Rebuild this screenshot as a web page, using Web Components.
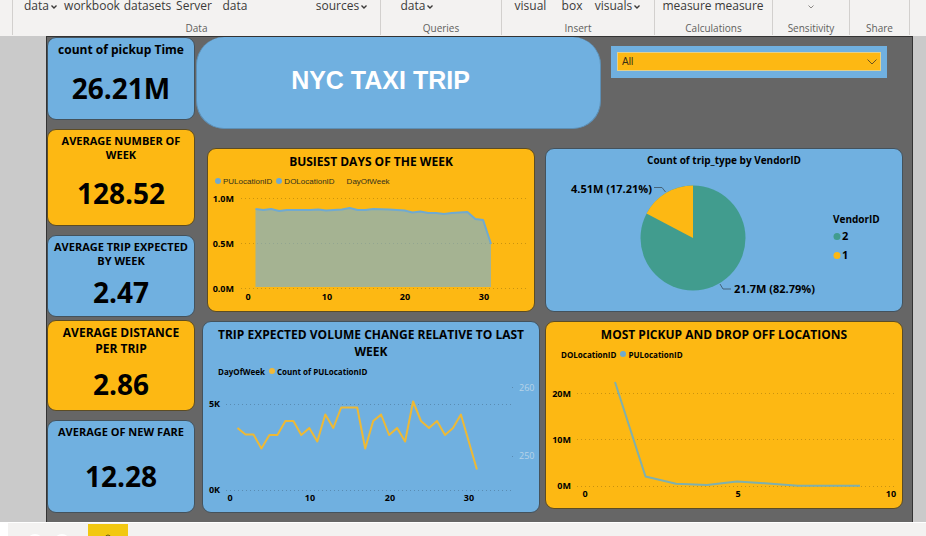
<!DOCTYPE html>
<html lang="en">
<head>
<meta charset="utf-8">
<title>NYC Taxi Trip</title>
<style>
  html, body { margin: 0; }
  body { font-family: "Open Sans", "Noto Sans", sans-serif; color: #000; background: #f3f2f1; overflow: hidden; }
</style>
</head>
<body>
<report-app></report-app>

<template id="ribbon-button-tpl">
  <style>
    :host { display: block; text-align: center; font-size: 12px; line-height: 12px; }
    button { font: inherit; color: #3b3a39; background: none; border: 0; padding: 0; margin: 0 -8px; white-space: nowrap; }
    svg { display: none; width: 6px; height: 4px; margin-left: 2px; vertical-align: 1px; fill: none; stroke: #3b3a39; stroke-width: 1.4; }
    :host([menu]) svg { display: inline-block; }
    :host([menu="only"]) svg { stroke: #8a8886; stroke-width: 1; margin: 0; }
  </style>
  <button type="button"><slot></slot><svg viewBox="0 0 6 4" aria-hidden="true"><path d="M.5 .5 3 3 5.5 .5"/></svg></button>
</template>

<template id="ribbon-group-tpl">
  <style>
    :host { display: flex; flex-direction: column; justify-content: space-between; border-right: 1px solid #d2d0ce; min-width: 0; }
    .row { display: grid; grid-template-columns: var(--cols, 1fr); height: 12px; }
    .label { font-size: 10px; line-height: 14px; color: #605e5c; text-align: center; }
  </style>
  <div class="row"><slot></slot></div>
  <div class="label"></div>
</template>

<template id="app-ribbon-tpl">
  <style>
    :host { display: grid; grid-template-columns: 13fr 368fr 121fr 153fr 118fr 77fr 60fr 16fr; height: 36px; padding-bottom: 1px; box-sizing: border-box; background: #f3f2f1; }
    .data { --cols: 7fr 41fr 62fr 49fr 44fr 38fr 61fr 53fr 12fr; }
    .queries { --cols: 16fr 40fr 64fr; }
    .insert { --cols: 9fr 39fr 8fr 28fr 8fr 47fr 13fr; }
    .calc { --cols: 6fr 52fr 52fr 7fr; }
  </style>
  <ribbon-group></ribbon-group>
  <ribbon-group class="data" label="Data">
    <span></span><ribbon-button menu>data</ribbon-button><ribbon-button>workbook</ribbon-button><ribbon-button>datasets</ribbon-button><ribbon-button>Server</ribbon-button><ribbon-button>data</ribbon-button><span></span><ribbon-button menu>sources</ribbon-button>
  </ribbon-group>
  <ribbon-group class="queries" label="Queries"><span></span><ribbon-button menu>data</ribbon-button></ribbon-group>
  <ribbon-group class="insert" label="Insert"><span></span><ribbon-button>visual</ribbon-button><span></span><ribbon-button>box</ribbon-button><span></span><ribbon-button menu>visuals</ribbon-button></ribbon-group>
  <ribbon-group class="calc" label="Calculations"><span></span><ribbon-button>measure</ribbon-button><ribbon-button>measure</ribbon-button></ribbon-group>
  <ribbon-group label="Sensitivity"><ribbon-button menu="only"></ribbon-button></ribbon-group>
  <ribbon-group label="Share"></ribbon-group>
</template>

<template id="kpi-card-tpl">
  <style>
    :host { display: flex; flex-direction: column; box-sizing: border-box; border: 1px solid #44525c; border-radius: 9px; background: #70b0e0; padding: 4px 4px 0; text-align: center; min-height: 0; }
    :host([tone="amber"]) { background: #fdb813; border-color: #5c4c24; }
    h2 { margin: 0; font-size: 11px; line-height: 14px; font-weight: 700; }
    :host([size="large"]) h2 { font-size: 12px; line-height: 16px; }
    .value { flex: 1; display: flex; align-items: center; justify-content: center; font-size: 28px; line-height: 32px; font-weight: 700; }
  </style>
  <h2></h2><div class="value"><slot></slot></div>
</template>

<template id="slicer-box-tpl">
  <style>
    :host { display: block; background: #70b0e0; padding: 6px 6px 7px; }
    label { display: grid; align-items: center; }
    select { grid-area: 1 / 1; appearance: none; width: 100%; height: 19px; margin: 0; padding: 0 4px; border: 1px solid #e3d08c; border-radius: 0; background: #fdb813; color: #3b3014; font: 10px/16px "Liberation Sans", sans-serif; }
    svg { grid-area: 1 / 1; justify-self: end; margin-right: 4px; width: 10px; height: 6px; fill: none; stroke: #6b5320; pointer-events: none; }
  </style>
  <label><select aria-label="Filter"><option>All</option></select><svg viewBox="0 0 10 6" aria-hidden="true"><path d="M.5 .5 5 5 9.5 .5"/></svg></label>
</template>

<template id="legend-item-tpl">
  <style>
    :host { display: flex; align-items: center; }
    i { width: 6px; height: 6px; border-radius: 50%; background: var(--dot, transparent); margin-right: 2px; }
  </style>
  <i></i><slot></slot>
</template>

<template id="chart-card-tpl">
  <style>
    :host { display: block; box-sizing: border-box; border: 1px solid #44525c; border-radius: 9px; background: #70b0e0; padding: 4px 0; }
    :host([tone="amber"]) { background: #fdb813; border-color: #5c4c24; }
    h2 { margin: 0; padding: 0 8px; font-size: 12px; line-height: 17px; font-weight: 700; text-align: center; }
    :host([small]) h2 { font-size: 10px; line-height: 15px; padding-bottom: 2px; }
    .legend { display: flex; gap: 4px; margin: 4px 0 1px 7px; height: 14px; font-size: 8px; font-weight: 700; }
    .legend ::slotted(legend-item) { flex: none; }
    :host([small]) .legend { display: none; }
    :host([plain]) .legend { font-family: "Liberation Sans", sans-serif; font-weight: 400; color: #33301c; }
    svg { display: block; width: 100%; height: auto; font-size: 9px; font-weight: 700; }
    .grid { fill: none; stroke: #000; stroke-opacity: .2; stroke-dasharray: 1 3; }
    .y { text-anchor: end; } .x { text-anchor: middle; }
    .line { fill: none; stroke-width: 2; stroke-linejoin: round; }
    .leader { fill: none; stroke: #45637a; }
    .big { font-size: 11px; }
    .mid { font-size: 10px; }
  </style>
  <h2></h2><div class="legend"><slot></slot></div><svg role="img"></svg>
</template>

<template id="page-tabs-tpl">
  <style>
    :host { display: grid; grid-template-columns: 8fr 19fr 16fr 10fr 18fr 17fr 40fr 798fr; height: 14px; overflow: hidden; background: #f3f2f1; border-top: 1px solid #fff; box-sizing: border-box; }
    .edge { background: #fff; }
    button { border: 0; padding: 0; margin: 0; background: none; display: flex; justify-content: center; align-items: flex-start; }
    .tab { background: #f2c811; margin-top: 1px; }
    svg { width: 16px; height: 14px; flex: none; }
  </style>
  <span class="edge"></span><span></span>
  <button type="button" aria-label="Previous page"><svg viewBox="0 0 16 14"><circle cx="8" cy="19" r="8" fill="#fff"/></svg></button><span></span>
  <button type="button" aria-label="Next page"><svg viewBox="0 0 16 14"><circle cx="8" cy="19" r="8" fill="#fff"/></svg></button><span></span>
  <button type="button" class="tab" aria-label="Current page"><svg viewBox="0 0 16 14"><circle cx="8" cy="13.500" r="2.500" fill="none" stroke="#6a5a10"/></svg></button>
</template>

<template id="report-app-tpl">
  <style>
    :host { display: block; }
    .workspace { display: grid; grid-template-columns: 46fr 867fr 13fr; background: #cacaca; }
    .canvas { display: grid; grid-template-columns: 148fr 717fr; background: #666; border: 1px solid #333; border-bottom: 0; padding-bottom: 9px; }
    .cards, .tight { display: grid; gap: 9px; min-height: 0; }
    .cards { grid-template-rows: 83fr 97fr 177fr 93fr; }
    .tight { grid-template-rows: 83fr 91fr; gap: 3px; }
    .top, .mid, .low { display: grid; align-items: start; }
    .top { grid-template-columns: 1fr 405fr 10fr 276fr 25fr; }
    .mid { grid-template-columns: 12fr 328fr 10fr 358fr 9fr; margin-top: 19px; }
    .low { grid-template-columns: 7fr 338fr 5fr 358fr 9fr; margin-top: 9px; }
    h1 { grid-column: 2; margin: 0; padding: 24px 36px 28px 0; border: 1px solid #5d8fb5; border-top: 0; border-radius: 28px; background: #70b0e0; color: #fff; text-align: center; font: 700 25px/39px "Liberation Sans", sans-serif; }
    slicer-box { grid-column: 4; margin-top: 9px; }
    .a { grid-column: 2; } .b { grid-column: 4; }
  </style>
  <app-ribbon></app-ribbon>
  <div class="workspace">
    <span></span>
    <main class="canvas">
      <div class="cards">
        <kpi-card size="large" label="count of pickup Time">26.21M</kpi-card>
        <kpi-card tone="amber" label="AVERAGE NUMBER OF WEEK">128.52</kpi-card>
        <div class="tight">
          <kpi-card label="AVERAGE TRIP EXPECTED BY WEEK">2.47</kpi-card>
          <kpi-card size="large" tone="amber" label="AVERAGE DISTANCE PER TRIP">2.86</kpi-card>
        </div>
        <kpi-card label="AVERAGE OF NEW FARE">12.28</kpi-card>
      </div>
      <div>
        <div class="top"><h1>NYC TAXI TRIP</h1><slicer-box></slicer-box></div>
        <div class="mid">
          <chart-card class="a" tone="amber" plain chart="days" label="BUSIEST DAYS OF THE WEEK">
            <legend-item style="--dot:#70aad0">PULocationID</legend-item><legend-item style="--dot:#70aad0">DOLocationID</legend-item><legend-item>DayOfWeek</legend-item>
          </chart-card>
          <chart-card class="b" small chart="pie" label="Count of trip_type by VendorID"></chart-card>
        </div>
        <div class="low">
          <chart-card class="a" chart="volume" label="TRIP EXPECTED VOLUME CHANGE RELATIVE TO LAST WEEK">
            <legend-item>DayOfWeek</legend-item><legend-item style="--dot:#f0b93a">Count of PULocationID</legend-item>
          </chart-card>
          <chart-card class="b" tone="amber" chart="places" label="MOST PICKUP AND DROP OFF LOCATIONS">
            <legend-item>DOLocationID</legend-item><legend-item style="--dot:#70aad0">PULocationID</legend-item>
          </chart-card>
        </div>
      </div>
    </main>
    <span></span>
  </div>
  <page-tabs></page-tabs>
</template>

<script>
const charts = {
  days: { box: '208 188 326 118', draw() {
    const y = [208,209,208,210,209,209,209,209,208.5,209.5,209,208.5,207,209,209,208,208.3,208.5,209,209.5,211.5,210.5,212,212,213,212,211.5,211,218,219,243];
    const p = y.map((v, i) => `${(255.5 + i * 7.85).toFixed(1)},${v}`).join(' ');
    return `<path class="grid" d="M241 197.5H528M241 242.5H528M241 287.5H528"/>
      <polygon points="255.5,286 ${p} 491,286" fill="#70b0e0" fill-opacity=".62"/>
      <polyline class="line" points="${p}" stroke="#70aad0"/>
      <text class="y" x="234" y="201">1.0M</text><text class="y" x="234" y="246">0.5M</text><text class="y" x="234" y="291">0.0M</text>
      <text class="x" x="248" y="299">0</text><text class="x" x="327" y="299">10</text><text class="x" x="405" y="299">20</text><text class="x" x="484" y="299">30</text>`;
  } },
  pie: { box: '546 169 356 137', draw: () => `
      <circle cx="693" cy="237" r="52.5" fill="#419c8e"/>
      <path d="M693 237V184.500A52.5 52.5 0 0 0 646.500 212.600Z" fill="#fdb813"/>
      <path class="leader" d="M654 186.500H662L665.500 191M720 283 723 288H731"/>
      <text class="big" x="571" y="192">4.51M (17.21%)</text><text class="big" x="734" y="292">21.7M (82.79%)</text>
      <text class="mid" x="833" y="222">VendorID</text>
      <circle cx="837" cy="235.500" r="3.500" fill="#419c8e"/><circle cx="837" cy="254.500" r="3.500" fill="#fdb813"/>
      <text class="big" x="842" y="239">2</text><text class="big" x="842" y="258">1</text>` },
  volume: { box: '203 378 336 129', draw() {
    const y = [427,433.5,433.5,447.5,434,434,420,420,434,427,440.5,413.5,427,406.5,406.5,406.5,447.5,420,413.5,434,427,440.5,400.5,420,427,420,434,427,413.5,441,468.5];
    const p = y.map((v, i) => `${(237.5 + i * 7.98).toFixed(1)},${v}`).join(' ');
    return `<path class="grid" d="M226 403.500H512M226 489.500H512M512 386.500H516M512 455.500H516"/>
      <polyline class="line" points="${p}" stroke="#edb936"/>
      <text class="y" x="220" y="406">5K</text><text class="y" x="220" y="492">0K</text>
      <text class="x" x="230" y="500">0</text><text class="x" x="310" y="500">10</text><text class="x" x="390" y="500">20</text><text class="x" x="469" y="500">30</text>
      <g fill="#b7d3e8" font-weight="400"><text x="519" y="390">260</text><text x="519" y="458">250</text></g>`;
  } },
  places: { box: '546 361 356 142', draw: () => `
      <path class="grid" d="M577 392.500H896M577 438.500H896M577 485.500H896"/>
      <polyline class="line" points="615,381 645.5,475.5 676,482.8 707,484 737,480.5 768,482.5 798,484.8 860,484.8" stroke="#7fb0ae"/>
      <text class="y" x="571" y="396">20M</text><text class="y" x="571" y="442">10M</text><text class="y" x="571" y="488">0M</text>
      <text class="x" x="585" y="496">0</text><text class="x" x="738" y="496">5</text><text class="x" x="891" y="496">10</text>` }
};

function define(name, ready) {
  customElements.define(name, class extends HTMLElement {
    connectedCallback() {
      if (this.shadowRoot) return;
      const root = this.attachShadow({ mode: 'open' });
      root.append(document.getElementById(name + '-tpl').content.cloneNode(true));
      if (ready) ready(this, root);
    }
  });
}
define('ribbon-button', (el, root) => {
  if (el.getAttribute('menu') === 'only') root.querySelector('button').setAttribute('aria-label', 'Sensitivity');
});
define('ribbon-group', (el, root) => { root.querySelector('.label').textContent = el.getAttribute('label') || ''; });
define('app-ribbon');
define('kpi-card', (el, root) => { root.querySelector('h2').textContent = el.getAttribute('label'); });
define('slicer-box');
define('legend-item');
define('chart-card', (el, root) => {
  root.querySelector('h2').textContent = el.getAttribute('label');
  const chart = charts[el.getAttribute('chart')];
  const svg = root.querySelector('svg');
  svg.setAttribute('viewBox', chart.box);
  svg.setAttribute('aria-label', el.getAttribute('label'));
  svg.innerHTML = chart.draw();
});
define('page-tabs');
define('report-app');
</script>
</body>
</html>
